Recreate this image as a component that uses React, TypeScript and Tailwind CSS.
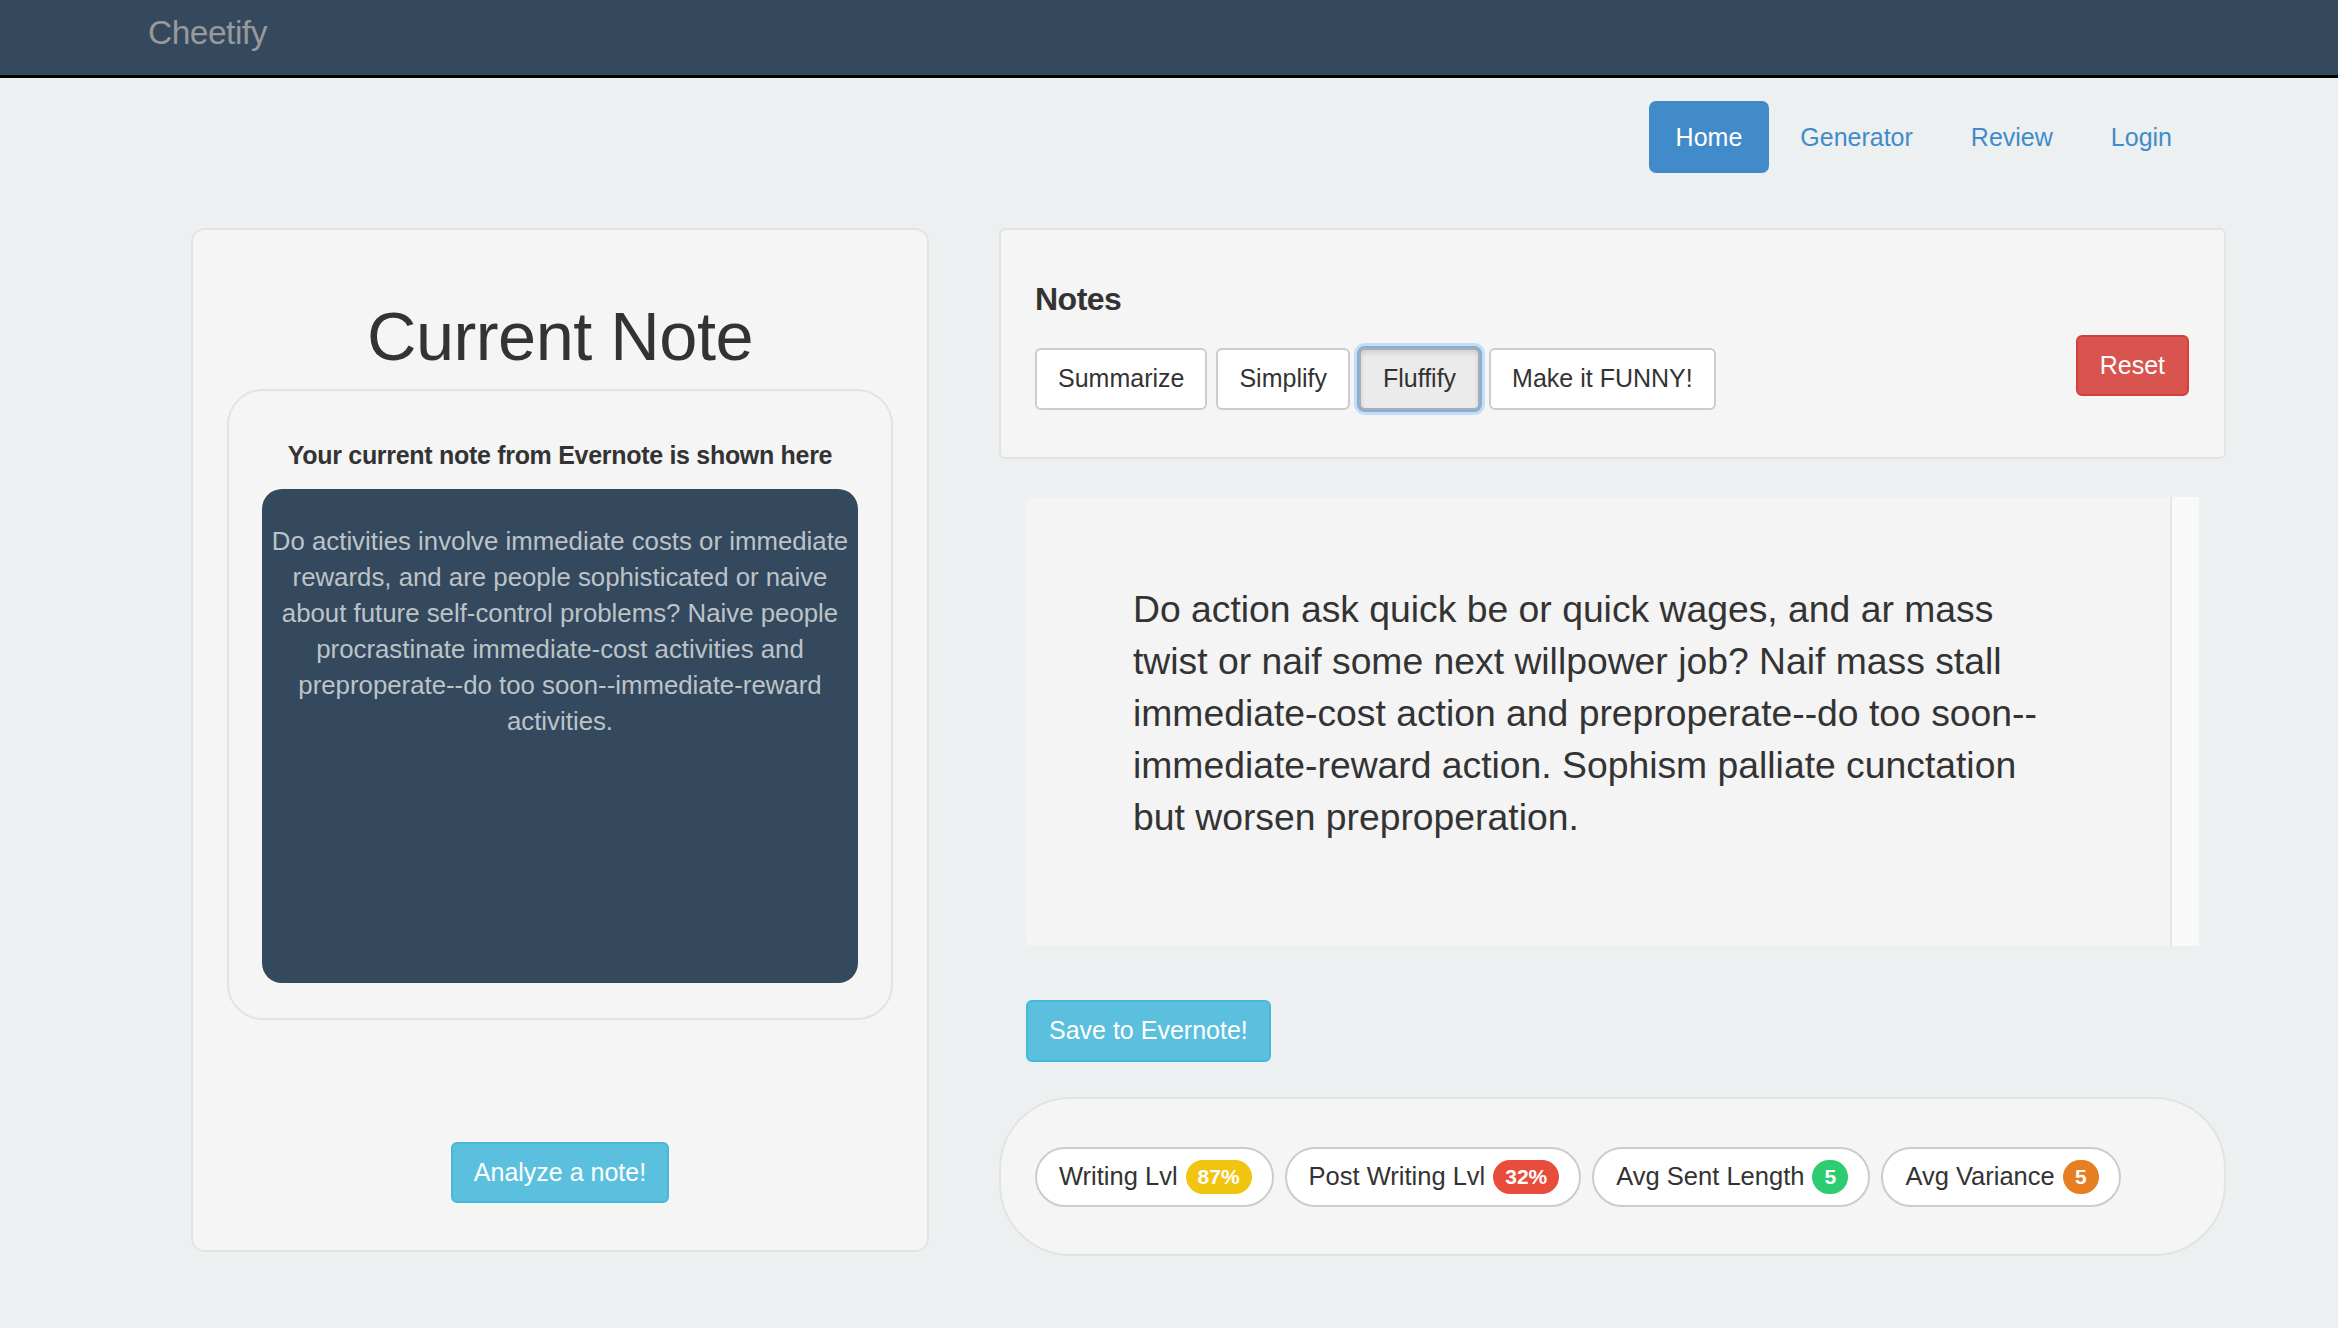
import React from "react";

const note =
  "Do activities involve immediate costs or immediate rewards, and are people sophisticated or naive about future self-control problems? Naive people procrastinate immediate-cost activities and preproperate--do too soon--immediate-reward activities.";

const fluffed =
  "Do action ask quick be or quick wages, and ar mass twist or naif some next willpower job? Naif mass stall immediate-cost action and preproperate--do too soon--immediate-reward action. Sophism palliate cunctation but worsen preproperation.";

const stats = [
  { label: "Writing Lvl", value: "87%", color: "bg-[#f1c40f]" },
  { label: "Post Writing Lvl", value: "32%", color: "bg-[#e74c3c]" },
  { label: "Avg Sent Length", value: "5", color: "bg-[#2ecc71]" },
  { label: "Avg Variance", value: "5", color: "bg-[#e67e22]" },
];

export default function App() {
  return (
    <div className="min-h-screen bg-[#ecf0f1] font-['Liberation_Sans',Arial,sans-serif] text-[#333]">
      <header className="h-[78px] bg-[#34495e] border-b-[3px] border-black flex items-center pl-[148px] pb-[9px]">
        <span className="text-[33.5px] text-[#999] tracking-[-0.5px]">Cheetify</span>
      </header>

      <nav className="flex justify-end pr-[139px] pt-[23px]">
        <ul className="flex gap-[4px] text-[25px]">
          <li>
            <a className="block h-[72px] leading-[72px] px-[27px] rounded-[7px] bg-[#428bca] text-white">Home</a>
          </li>
          <li>
            <a className="block h-[72px] leading-[72px] px-[27px] text-[#428bca]">Generator</a>
          </li>
          <li>
            <a className="block h-[72px] leading-[72px] px-[27px] text-[#428bca]">Review</a>
          </li>
          <li>
            <a className="block h-[72px] leading-[72px] px-[27px] text-[#428bca]">Login</a>
          </li>
        </ul>
      </nav>

      <main className="flex items-start gap-[70px] pl-[191px] mt-[55px]">
        {/* left card */}
        <section className="w-[738px] h-[1024px] bg-[#f5f5f5] border-2 border-[#e3e3e3] rounded-[14px] flex flex-col items-center pt-[70px] px-[34px]">
          <h1 className="text-[68.5px] leading-[74px] tracking-[-0.5px]">Current Note</h1>
          <div className="mt-[15px] w-full h-[631px] border-2 border-[#e3e3e3] rounded-[36px] px-[33px] pt-[46px] flex flex-col items-center">
            <p className="text-[25px] font-bold leading-[36px] tracking-[-0.3px]">
              Your current note from Evernote is shown here
            </p>
            <div className="mt-[16px] w-full h-[494px] bg-[#34495e] rounded-[20px] px-[7px] pt-[34px] text-center text-[25.8px] leading-[36px] text-[#bdc3c7]">
              {note}
            </div>
          </div>
          <button className="mt-[122px] h-[61px] px-[21px] bg-[#5bc0de] border-2 border-[#46b8da] rounded-[6px] text-white text-[25px]">
            Analyze a note!
          </button>
        </section>

        {/* right column */}
        <section className="w-[1227px] flex flex-col">
          <div className="h-[231px] bg-[#f5f5f5] border-2 border-[#e3e3e3] rounded-[6px] flex items-end justify-between pl-[34px] pr-[35px] pb-[47px]">
            <div>
              <h2 className="text-[32px] font-bold leading-[36px] tracking-[-0.5px]">Notes</h2>
              <div className="mt-[31px] flex gap-[9px] text-[25px]">
                <button className="h-[62px] px-[21px] bg-white border-2 border-[#ccc] rounded-[6px]">Summarize</button>
                <button className="h-[62px] px-[21px] bg-white border-2 border-[#ccc] rounded-[6px]">Simplify</button>
                <button className="h-[62px] px-[22px] bg-[#ebebeb] border-2 border-[#adadad] rounded-[6px] shadow-[0_0_0_2px_#7fb0e0,0_0_0_5px_#c6dcf2,inset_0_3px_5px_rgba(0,0,0,0.12)]">
                  Fluffify
                </button>
                <button className="h-[62px] px-[21px] bg-white border-2 border-[#ccc] rounded-[6px]">Make it FUNNY!</button>
              </div>
            </div>
            <button className="mb-[14px] h-[61px] px-[22px] bg-[#d9534f] border-2 border-[#d43f3a] rounded-[6px] text-white text-[25px]">
              Reset
            </button>
          </div>

          <div className="mt-[38px] mx-[27px] h-[449px] flex bg-[#f4f4f4] rounded-[6px]">
            <div className="flex-1 pl-[107px] pt-[86px]">
              <p className="w-[920px] text-[37.3px] leading-[52px] text-[#333]">{fluffed}</p>
            </div>
            <div className="w-[29px] border-l-2 border-[#e6e6e6] bg-[#f9f9f9]" />
          </div>

          <div className="mt-[54px] mx-[27px]">
            <button className="h-[62px] px-[21px] bg-[#5bc0de] border-2 border-[#46b8da] rounded-[6px] text-white text-[25px]">
              Save to Evernote!
            </button>
          </div>

          <div className="mt-[35px] h-[159px] bg-[#f5f5f5] border-2 border-[#e3e3e3] rounded-[72px] flex items-center pl-[34px] gap-[11px]">
            {stats.map((s) => (
              <div
                key={s.label}
                className="h-[60px] flex items-center bg-white border-2 border-[#ccc] rounded-[30px] pl-[22px] pr-[20px] text-[25.5px]"
              >
                <span>{s.label}</span>
                <span
                  className={`${s.color} ml-[8px] h-[34px] min-w-[36px] px-[12px] rounded-full flex items-center justify-center text-white font-bold text-[21px]`}
                >
                  {s.value}
                </span>
              </div>
            ))}
          </div>
        </section>
      </main>
    </div>
  );
}
